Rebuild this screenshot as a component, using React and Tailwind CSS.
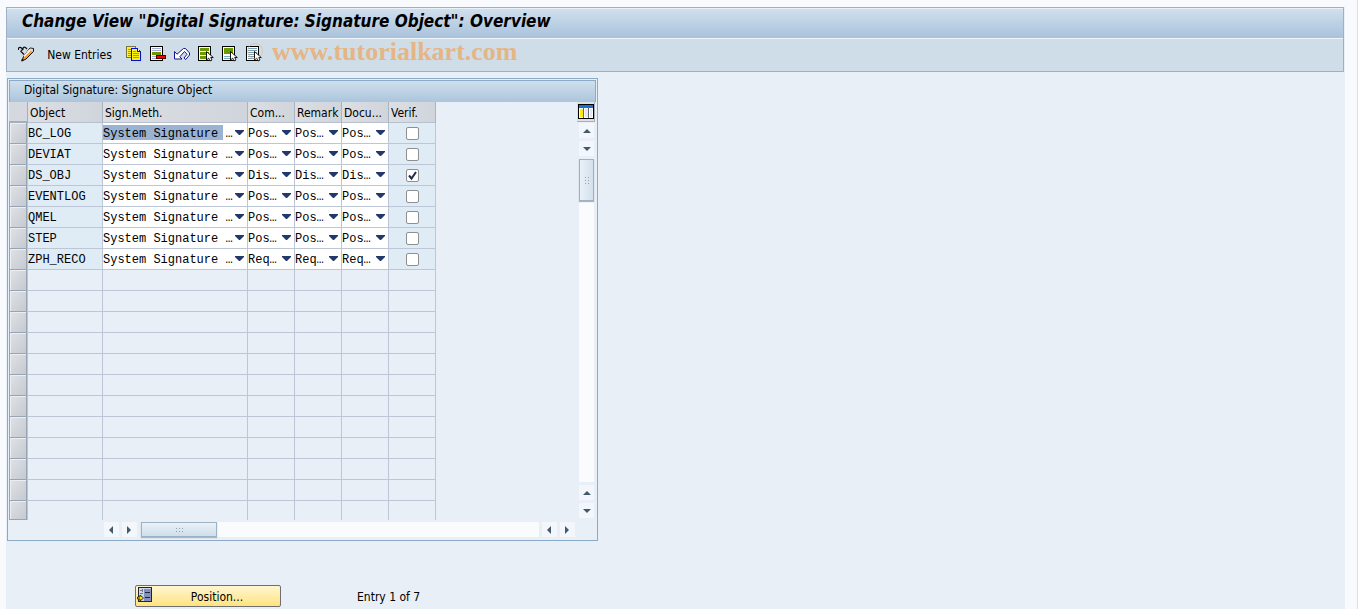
import React, { useState } from "react";

const registros = [
    { objeto: "BC_LOG", opcao: "Pos…", verif: false },
    { objeto: "DEVIAT", opcao: "Pos…", verif: false },
    { objeto: "DS_OBJ", opcao: "Dis…", verif: true },
    { objeto: "EVENTLOG", opcao: "Pos…", verif: false },
    { objeto: "QMEL", opcao: "Pos…", verif: false },
    { objeto: "STEP", opcao: "Pos…", verif: false },
    { objeto: "ZPH_RECO", opcao: "Req…", verif: false },
];

const LINHAS_VISIVEIS = 19;
const colunas = ["Comment", "Remark", "Document"];

function Icone({ children }) {
    return (
        <svg className="w-4 h-4 block" viewBox="0 0 16 16" shapeRendering="crispEdges" fill="none">
            {children}
        </svg>
    );
}

function Cursor() {
    return (
        <path
            d="M8.500 5.500v8.500l2.200-1.800 1.300 2.800 2-1-1.300-2.500h2.600z"
            fill="#fff"
            stroke="#000"
            strokeWidth="0.900"
            shapeRendering="auto"
        />
    );
}

function IconeLapis() {
    return (
        <svg className="w-4 h-4 block" viewBox="0 0 16 16" fill="none">
            <path d="M0.500 4C0 1.500 2 0.500 3.500 2s0.500 3-1 3M5 4C4.500 1.500 6 0.500 7.500 1.500L9 3M2.500 5L6 8.500" stroke="#111" strokeWidth="1.200" />
            <path d="M12 2l3.500 0.500v3L8 13l-4 2 1.500-4.500z" fill="#ff9d1a" stroke="#111" strokeWidth="1" />
            <path d="M11.500 3.500l1 1-6 6-0.500-0.500z" fill="#fff1d8" stroke="#fff1d8" />
            <path d="M12.500 2.500l2.500 0.500v2l-1 1-2.500-2.500z" fill="#d5d9e6" />
            <path d="M4 12.500L3 15.500l3-1.500z" fill="#111" />
        </svg>
    );
}

function IconeCopiar() {
    return (
        <Icone>
            <path d="M0.500 0.500h9v11h-9z" fill="#ffee2a" stroke="#7a7640" />
            <path d="M2 3.500h3M2 5.500h3M2 7.500h3M2 9.500h3" stroke="#a39c2c" />
            <path d="M5.500 2.500h6l3 3v9h-9z" fill="#fff200" />
            <path d="M7 5.500h3M7 7.500h6M7 9.500h6M7 11.500h6" stroke="#a39c2c" />
            <path d="M11 3h1v1h1v1h1v1h-3z" fill="#fff" />
            <path d="M5 2h7v1H6v11h8V6h-3V3h1v2h1V4h1v1h1v10H5z" fill="#0010e0" />
        </Icone>
    );
}

function IconeExcluir() {
    return (
        <Icone>
            <path d="M0.500 0.500h12v14h-12z" fill="#fff" stroke="#000" />
            <path d="M2 2.500h9M2 4.500h9" stroke="#a9a9d6" />
            <path d="M2 6h9v3H2z" fill="#6b9a00" />
            <path d="M2 10.500h5M2 12.500h9" stroke="#a9a9d6" />
            <path d="M6.500 9.500h9v3h-9z" fill="#f00" stroke="#500" />
        </Icone>
    );
}

function IconeDesfazer() {
    return (
        <svg className="w-4 h-4 block" viewBox="0 0 16 16" fill="none">
            <path
                d="M0.500 5.500v7.500h7.500L5.800 10.800l4.700-5.300 2.500 2.800-3 3.700 1.800 1.500 3.700-4.500V7L11.500 2.500H9.500L3 8.200z"
                fill="#fff"
                stroke="#15158a"
                strokeWidth="1"
                strokeLinejoin="round"
            />
        </svg>
    );
}

function IconeMarcarTudo() {
    return (
        <Icone>
            <path d="M0.500 0.500h12v14h-12z" fill="#fff" stroke="#000" />
            <path d="M2 2h9v3H2zM2 6h9v3H2zM2 10h9v3H2z" fill="#6b9a00" />
            <Cursor />
        </Icone>
    );
}

function IconeMarcarBloco() {
    return (
        <Icone>
            <path d="M0.500 0.500h12v14h-12z" fill="#fff" stroke="#000" />
            <path d="M2 2h9v6H2z" fill="#6b9a00" />
            <path d="M2 10.500h9M2 12.500h9" stroke="#7fa8bd" />
            <Cursor />
        </Icone>
    );
}

function IconeDesmarcar() {
    return (
        <Icone>
            <path d="M0.500 0.500h12v14h-12z" fill="#fff" stroke="#000" />
            <path d="M2 2.500h9M2 4.500h9M2 6.500h9M2 8.500h9M2 10.500h9M2 12.500h9" stroke="#7f9fb0" />
            <Cursor />
        </Icone>
    );
}

function IconeConfigurar() {
    return (
        <Icone>
            <path d="M0.500 0.500h15v14h-15z" fill="#fff" stroke="#000" />
            <path d="M1 1h14v3H1z" fill="#1c6fd0" />
            <path d="M2 5h3v8H2z" fill="#ffe81a" />
            <path d="M7 5h3v8H7zM12 5h2v8h-2z" fill="#e4e8ee" />
            <path d="M5.500 4v10M10.500 4v10" stroke="#667" />
        </Icone>
    );
}

function IconePosicao() {
    return (
        <Icone>
            <path d="M1.500 0.500h13v14h-13z" fill="#cdd8ea" stroke="#223" />
            <path d="M7 2h7v12H7z" fill="#8290bd" />
            <path d="M8 5.500h5M8 10.500h5" stroke="#223" />
            <path d="M3 3.500h3M5.500 2v3M3 6.500h3" stroke="#778" />
            <path d="M0.500 10h2.500V8l3.500 3-3.500 3v-2H0.500z" fill="#ffe600" stroke="#332" shapeRendering="auto" />
        </Icone>
    );
}

const setas = {
    cima: "M0 6L4 2L8 6z",
    baixo: "M0 2h8L4 6z",
    esquerda: "M5 0v8L1 4z",
    direita: "M1 0v8L5 4z",
};

function BotaoSeta({ direcao }) {
    return (
        <button aria-label={direcao} className="w-[15px] h-[15px] shrink-0 flex items-center justify-center bg-[#f3f6fa]">
            <svg className="w-2 h-2" viewBox="0 0 8 8">
                <path d={setas[direcao]} fill="#435a6b" />
            </svg>
        </button>
    );
}

function Pontos({ vertical }) {
    return (
        <span className={vertical ? "grid grid-cols-2 gap-[2px]" : "grid grid-cols-3 gap-[2px]"}>
            {[0, 1, 2, 3, 4, 5].map((i) => (
                <span key={i} className="w-px h-px bg-[#8fa3b3]" />
            ))}
        </span>
    );
}

function Lista({ rotulo, valor, selecionado }) {
    return (
        <div className="relative h-5">
            <select
                aria-label={rotulo}
                defaultValue={valor}
                className={`block w-full h-5 pt-px appearance-none outline-none font-['Liberation_Mono',monospace] text-[12px] leading-5 text-black ${
                    selecionado
                        ? "bg-white bg-[linear-gradient(#9ab3d3,#9ab3d3)] bg-[length:120px_15px] bg-[position:0_2px] bg-no-repeat"
                        : "bg-white"
                }`}
            >
                <option>{valor}</option>
            </select>
            <svg className="absolute right-[3px] top-[7px] w-[9px] h-[6px] pointer-events-none" viewBox="0 0 9 6">
                <path d="M0 0h9v1L5 5H4L0 1z" fill="#22386b" />
            </svg>
        </div>
    );
}

function Cabecalho({ children }) {
    return (
        <th scope="col" className="h-[21px] p-0 pl-[2px] pt-[2px] text-left font-normal whitespace-nowrap overflow-hidden bg-linear-to-r from-[#dcdfe3] to-[#d0d5dc] border-r border-b border-r-[#a9b4c3] border-b-[#b7c0cc]">
            {children}
        </th>
    );
}

const celula = "p-0 border-r border-b border-[#bcc6d6]";

function Tabela() {
    const [marcados, setMarcados] = useState(registros.map((r) => r.verif));

    const alternar = (index) => {
        setMarcados(marcados.map((m, i) => (i === index ? !m : m)));
    };

    return (
        <table className="w-[427px] table-fixed border-separate border-spacing-0">
            <colgroup>
                <col className="w-[19px]" />
                <col className="w-[75px]" />
                <col className="w-[145px]" />
                <col className="w-[47px]" />
                <col className="w-[47px]" />
                <col className="w-[47px]" />
                <col className="w-[47px]" />
            </colgroup>
            <thead>
                <tr>
                    <th className="p-0 bg-[#d5d9df] border-r border-b-2 border-[#a3afbd]" aria-label="Selecionar" />
                    <Cabecalho>Object</Cabecalho>
                    <Cabecalho>Sign.Meth.</Cabecalho>
                    <Cabecalho>Com...</Cabecalho>
                    <Cabecalho>Remark</Cabecalho>
                    <Cabecalho>Docu...</Cabecalho>
                    <Cabecalho>Verif.</Cabecalho>
                </tr>
            </thead>
            <tbody>
                {Array.from({ length: LINHAS_VISIVEIS }).map((_, index) => {
                    const registro = registros[index];
                    const ultima = index === LINHAS_VISIVEIS - 1;
                    return (
                        <tr key={index} className={ultima ? "h-[19px]" : "h-[21px]"}>
                            <td className="p-0 border-r border-[#bcc6d6]">
                                <button
                                    aria-label={`Linha ${index + 1}`}
                                    className={`block w-[18px] border border-t-0 border-[#98a3b3] bg-linear-to-br from-[#dfe2e6] to-[#c5cad1] shadow-[inset_1px_1px_0_#eceef1] ${
                                        ultima ? "h-[19px]" : "h-[21px]"
                                    }`}
                                />
                            </td>
                            {registro ? (
                                <>
                                    <td className={`${celula} pt-[2px] bg-[#dfebf5] font-['Liberation_Mono',monospace] text-[12px]`}>
                                        {registro.objeto}
                                    </td>
                                    <td className={celula}>
                                        <Lista rotulo="Sign.Meth." valor="System Signature …" selecionado={index === 0} />
                                    </td>
                                    {colunas.map((coluna) => (
                                        <td key={coluna} className={celula}>
                                            <Lista rotulo={coluna} valor={registro.opcao} />
                                        </td>
                                    ))}
                                    <td className={`${celula} bg-[#dfebf5]`}>
                                        <input
                                            type="checkbox"
                                            aria-label={`Verif. ${registro.objeto}`}
                                            checked={marcados[index]}
                                            onChange={() => alternar(index)}
                                            className="block mx-auto w-[13px] h-[13px] appearance-none rounded-[2px] border border-[#8e8f8f] bg-white checked:bg-[url('data:image/svg+xml,%3Csvg%20xmlns=%22http://www.w3.org/2000/svg%22%20viewBox=%220%200%2011%2011%22%3E%3Cpath%20d=%22M2%205.500l2.500%203L9%202%22%20fill=%22none%22%20stroke=%22%23222c44%22%20stroke-width=%222%22/%3E%3C/svg%3E')]"
                                        />
                                    </td>
                                </>
                            ) : (
                                [0, 1, 2, 3, 4, 5].map((i) => (
                                    <td key={i} className={ultima ? "p-0 border-r border-[#bcc6d6]" : celula} />
                                ))
                            )}
                        </tr>
                    );
                })}
            </tbody>
        </table>
    );
}

export default function App() {
    return (
        <div className="min-h-screen pt-[7px] pl-[6px] pr-3 bg-[#f9fafd] border-r border-[#dcdfe3] font-['DejaVu_Sans_Condensed','DejaVu_Sans',sans-serif] text-[12px] leading-4 text-black">
            <div className="min-h-[602px] pr-px bg-[#e8eff6]">
                {/* Título e barra de ferramentas */}
                <header className="border border-[#9fb0c4]">
                    <h1 className="h-[30px] pl-[15px] text-[17px] leading-[25px] font-bold italic whitespace-nowrap border-t border-[#eaf2f9] bg-linear-to-b from-[#d0dfed] to-[#a9c2db]">
                        Change View "Digital Signature: Signature Object": Overview
                    </h1>
                    <div className="h-[33px] pl-[11px] pb-[2px] flex items-center border-t border-[#f0f5f9] bg-[#cfdde8]">
                        <button aria-label="Exibir / Modificar"><IconeLapis /></button>
                        <button className="w-[67px] ml-3 mr-[13px] pt-px whitespace-nowrap">New Entries</button>
                        <div className="flex gap-2">
                            <button aria-label="Copiar"><IconeCopiar /></button>
                            <button aria-label="Excluir"><IconeExcluir /></button>
                            <button aria-label="Desfazer"><IconeDesfazer /></button>
                            <button aria-label="Marcar tudo"><IconeMarcarTudo /></button>
                            <button aria-label="Marcar bloco"><IconeMarcarBloco /></button>
                            <button aria-label="Desmarcar tudo" className="relative">
                                <IconeDesmarcar />
                                <span className="absolute left-px -top-[3px] w-4 h-4 rounded-full border border-[#e3b58a]/60" />
                            </button>
                        </div>
                        <span className="ml-[10px] pb-1 font-['Liberation_Serif',serif] font-bold text-[26px] leading-7 text-[#e5b585]">
                            www.tutorialkart.com
                        </span>
                    </div>
                </header>

                <main className="pt-[6px] pl-px">
                    <section className="w-[591px] max-w-full p-px pb-0 border border-[#8aaac8]">
                        <h2 className="h-[22px] pl-[14px] leading-[19px] border border-b-0 border-[#8aaac8] bg-linear-to-b from-[#cfdfec] to-[#acc5dc]">
                            Digital Signature: Signature Object
                        </h2>
                        <div className="flex justify-between">
                            <Tabela />
                            <div className="flex flex-col items-start w-[19px]">
                                <button aria-label="Configurar tabela" className="w-[18px] h-5 flex items-center justify-center bg-[#dde1e6] border-r border-b border-[#a9b0b8]">
                                    <IconeConfigurar />
                                </button>
                                <div className="flex-1 flex flex-col items-center gap-[3px] pt-px pb-[2px] ml-[2px]">
                                    <BotaoSeta direcao="cima" />
                                    <BotaoSeta direcao="baixo" />
                                    <div className="flex-1 w-[15px] bg-[#fafbfc]">
                                        <div className="h-[42px] flex items-center justify-center border border-[#9eb2c3] bg-linear-to-r from-[#eaf1f8] to-[#d3e0eb] shadow-[0_1px_1px_#a9b6c2]">
                                            <Pontos vertical />
                                        </div>
                                    </div>
                                    <BotaoSeta direcao="cima" />
                                    <BotaoSeta direcao="baixo" />
                                </div>
                            </div>
                        </div>
                        <div className="flex gap-[3px] pl-[95px] pr-[21px] pt-[2px] pb-[3px]">
                            <BotaoSeta direcao="esquerda" />
                            <BotaoSeta direcao="direita" />
                            <div className="flex-1 h-[15px] ml-px bg-[#fafbfc]">
                                <div className="w-[76px] h-[15px] flex items-center justify-center border border-[#9eb2c3] bg-linear-to-b from-[#eaf1f8] to-[#cfdeea] shadow-[0_1px_1px_#a9b6c2]">
                                    <Pontos />
                                </div>
                            </div>
                            <BotaoSeta direcao="esquerda" />
                            <BotaoSeta direcao="direita" />
                        </div>
                    </section>

                    <div className="flex items-center mt-11 pl-32">
                        <button className="relative w-[146px] h-[22px] pl-[18px] pt-px rounded-[2px] border border-[#6f6f6f] bg-linear-to-b from-[#fff6cf] to-[#ffe37f]">
                            <span className="absolute left-px top-px"><IconePosicao /></span>
                            Position...
                        </button>
                        <p className="ml-[76px] pt-[2px]">Entry 1 of 7</p>
                    </div>
                </main>
            </div>
        </div>
    );
}
